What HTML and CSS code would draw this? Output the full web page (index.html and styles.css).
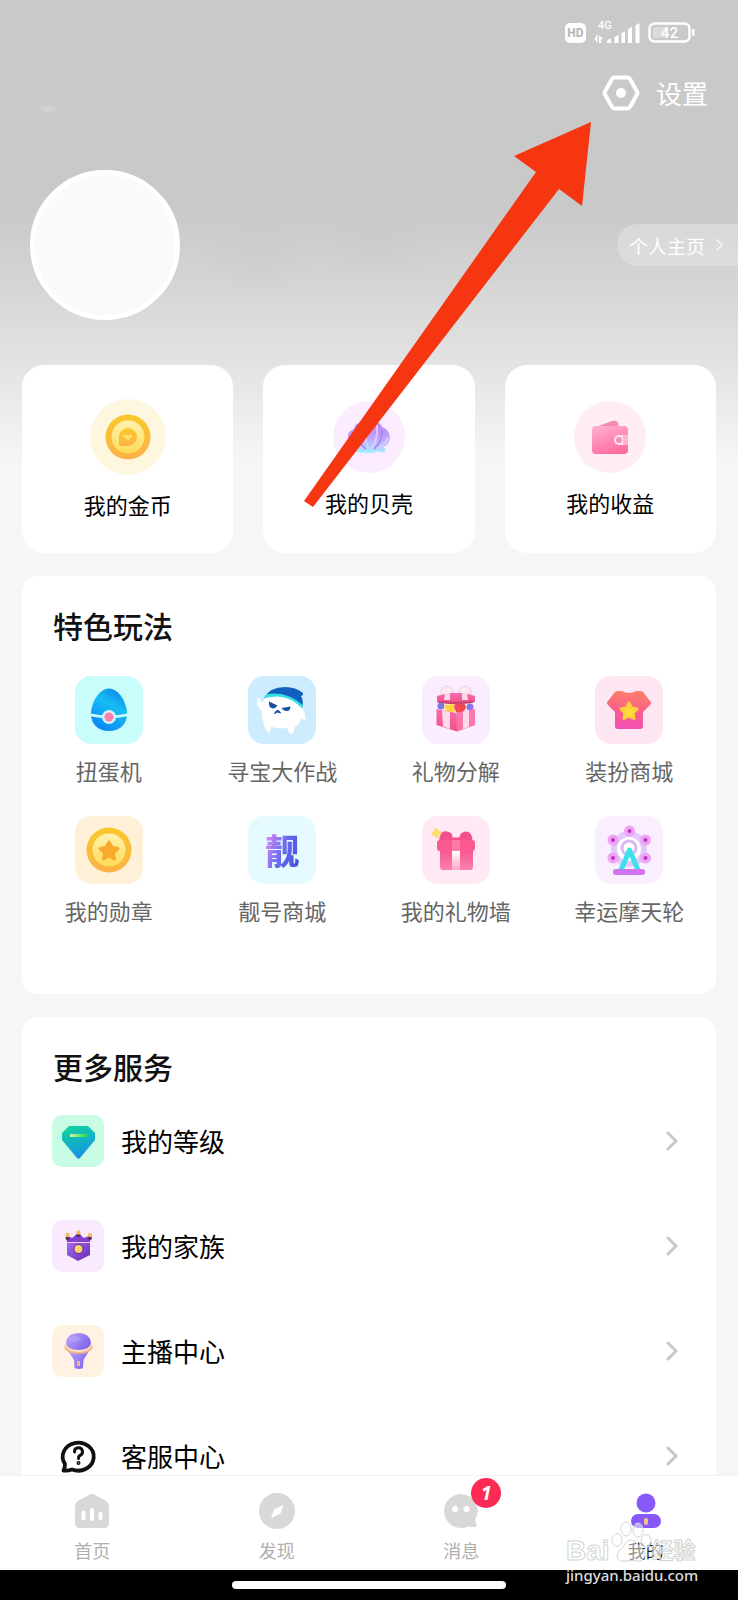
FILE: index.html
```html
<!DOCTYPE html>
<html lang="zh-CN">
<head>
  <meta charset="UTF-8" />
  <meta name="viewport" content="width=device-width, initial-scale=1" />
  <title>我的</title>
  <link rel="stylesheet" href="styles.css">
</head>
<body>
  <div class="app">
    <main class="page">
      <!-- Status bar -->
      <div class="status">
        <span class="hd">HD</span>
        <svg class="signal" viewBox="0 0 46 24" fill="#fff">
          <text x="4" y="8" font-size="11" font-weight="500" font-family="Roboto, sans-serif">4G</text>
          <path d="M0 17h2v-3h1.500v8zM5 14l4 4H7v4H5z"/>
          <path d="M13 22v-2q1-2 4-2.500V22zM20.500 22v-6l4-2v8zM27.500 22V12l3.500-1.500V22zM34 22V8l4-2v16zM41.500 22V4.500L45.500 2v20z"/>
        </svg>
        <svg class="battery" viewBox="0 0 48 22">
          <rect x="1.500" y="1.500" width="40" height="18" rx="5" fill="none" stroke="#fff" stroke-width="2.500"/>
          <rect x="5" y="5" width="14" height="11" rx="2" fill="#dcdcdc"/>
          <rect x="44" y="7" width="2.500" height="7" rx="1" fill="#fff"/>
          <text x="21.500" y="16" font-size="15" font-weight="500" text-anchor="middle" fill="#fff" font-family="Roboto, sans-serif">42</text>
        </svg>
      </div>

      <div class="toolbar">
        <a class="settings" href="#settings">
          <svg viewBox="0 0 38 36">
            <path d="M12.500 2.500h13q1.500 0 2.500 1.500l7 12.500q.800 1.500 0 3L28 32q-1 1.500-2.500 1.500h-13Q11 33.500 10 32L3 19.500q-.800-1.500 0-3L10 4q1-1.500 2.500-1.500z" fill="none" stroke="#fff" stroke-width="4"/>
            <circle cx="19" cy="18" r="5" fill="#fff"/>
          </svg>
          设置
        </a>
      </div>

      <div class="profile">
        <div class="avatar"></div>
        <a class="home-link" href="#profile">
          个人主页
          <svg viewBox="0 0 9 14"><path d="M1.500 1.500L7 7l-5.500 5.500" fill="none" stroke="#f4f4f4" stroke-width="1.500"/></svg>
        </a>
      </div>

      <div class="wallets">
        <a class="wallet" href="#coins">
          <svg class="wallet-icon wallet-icon-lg" viewBox="0 0 76 76">
            <defs>
              <linearGradient id="coinRing" x1="0" y1="0" x2="0" y2="1"><stop offset="0" stop-color="#f9c829"/><stop offset="1" stop-color="#fdb149"/></linearGradient>
              <linearGradient id="coinFace" x1="0" y1="0" x2="0" y2="1"><stop offset="0" stop-color="#fff3b0"/><stop offset="1" stop-color="#fedb55"/></linearGradient>
            </defs>
            <circle cx="38" cy="38" r="38" fill="#fef7e0"/>
            <circle cx="38" cy="38" r="22.500" fill="url(#coinRing)"/>
            <circle cx="38" cy="38" r="16.500" fill="url(#coinFace)"/>
            <path d="M29 38a9 9 0 1 1 9 9h-7q-2 0-2-2z" fill="url(#coinRing)"/>
            <path d="M33 35l3 1h3l3-1q1 3-1.500 4l-2.500 3-2.500-3Q32 38 33 35z" fill="#ffe169"/>
          </svg>
          <span>我的金币</span>
        </a>
        <a class="wallet" href="#shells">
          <svg class="wallet-icon" viewBox="0 0 72 72">
            <defs>
              <linearGradient id="shell" x1="0.500" y1="0" x2="0.500" y2="1"><stop offset="0" stop-color="#c07df4"/><stop offset="0.500" stop-color="#bfa0fa"/><stop offset="1" stop-color="#a5f0ff"/></linearGradient>
            </defs>
            <circle cx="36" cy="36" r="36" fill="#fbedff"/>
            <path d="M25 51q-5 0-3-4-7-2-7-9-1-8 6-10 1-7 8-6 6-5 11 0 7-2 9 4 8 3 8 11-1 7-7 9 3 1 2 4-2 3-6 0-10 4-21 1z" fill="url(#shell)"/>
            <path d="M33 48Q22 40 23 29M49 29q1 11-8 19" fill="none" stroke="#9d79ef" stroke-width="1.200"/>
            <path d="M29 47q-8-4-9-10M35 47q-4-12-1-22M39 47q6-10 5-22M45 47q8-4 10-10" fill="none" stroke="#dec8ff" stroke-width="2" stroke-linecap="round"/>
          </svg>
          <span>我的贝壳</span>
        </a>
        <a class="wallet" href="#income">
          <svg class="wallet-icon" viewBox="0 0 72 72">
            <defs>
              <linearGradient id="purse" x1="0.300" y1="0" x2="0.700" y2="1"><stop offset="0" stop-color="#ffa9ce"/><stop offset="1" stop-color="#fe6b9f"/></linearGradient>
            </defs>
            <circle cx="36" cy="36" r="36" fill="#ffedf3"/>
            <path d="M22 26l16-6q4-1.500 6 2l1 5z" fill="#f48ab0"/>
            <rect x="18" y="25" width="36" height="28" rx="4" fill="url(#purse)"/>
            <path d="M54 34h-9a5 5 0 0 0 0 10h9z" fill="#ffe4ee"/>
            <circle cx="45" cy="39" r="3" fill="#f98fb7"/>
            <path d="M49 34h5v10h-5z" fill="#fdb4ce"/>
          </svg>
          <span>我的收益</span>
        </a>
      </div>

      <section class="panel">
        <h2>特色玩法</h2>
        <div class="features">
          <a class="feature" href="#egg">
            <svg class="tile bg-cyan" viewBox="0 0 68 68">
              <defs><linearGradient id="egg" x1="0.800" y1="0" x2="0.300" y2="1"><stop offset="0" stop-color="#0b85e8"/><stop offset="0.400" stop-color="#17bdf4"/><stop offset="1" stop-color="#0b86f4"/></linearGradient></defs>
              <path d="M34 12.500C24 12.500 16 27 16 38c0 10 7 17 18 17s18-7 18-17c0-11-8-25.500-18-25.500z" fill="url(#egg)"/>
              <path d="M15.500 37.500q18.500 4 37 0v2.800q-18.500 4-37 0z" fill="#c9fdfc"/>
              <circle cx="34" cy="41" r="7" fill="#ccf6fb"/>
              <circle cx="34" cy="41" r="4.500" fill="#fc7eab"/>
            </svg>
            <span>扭蛋机</span>
          </a>
          <a class="feature" href="#treasure">
            <svg class="tile bg-sky" viewBox="0 0 68 68">
              <path d="M10 22q2 0 3.500 4l2.500-1 2-5h32q5 6 4.500 13 4 6 2.500 12l-4-3q-1 6-6 9-1 7-4 7-2.500-1-4-6-7 1-16-1-.500 7-3 5.500-4-4-4.500-10-2-5-1.500-11-4-4-5-8-.500-3 1-5.500z" fill="#fff"/>
              <path d="M16 22Q22 11 37 11q11 0 18 6v2l-2 1q3 5 1 12Q46 22 32 20q-8-1-16 2z" fill="#125fc0"/>
              <path d="M16 22l2-3.500Q29 16 40 20q8 3 14.500 9v3.500Q43 21 30 20.500q-7 0-14 1.500z" fill="#32dfe1"/>
              <path d="M21 25.500l8.500 4q-3 4-6 2.500-3-1-2.500-6.500zM42.500 30.500l-9 1.500q2 3.500 5.500 3 3 0 3.500-4.500z" fill="#164f9f"/>
              <path d="M26.500 37.500q3-6 6-.500l-3-1z" fill="#164f9f" stroke="#164f9f"/>
            </svg>
            <span>寻宝大作战</span>
          </a>
          <a class="feature" href="#decompose">
            <svg class="tile bg-lilac" viewBox="0 0 68 68">
              <defs>
                <linearGradient id="giftBox" x1="0" y1="0" x2="0" y2="1"><stop offset="0" stop-color="#fb6aad"/><stop offset="1" stop-color="#ef4f85"/></linearGradient>
              </defs>
              <circle cx="25" cy="16" r="6" fill="#fde9ef" stroke="#f3c9d5"/>
              <circle cx="43" cy="16" r="6" fill="#fde9ef" stroke="#f3c9d5"/>
              <path d="M15 20l11-3h17l10 3v5q-1 2-3 2l-16 1-16-1q-3 0-3-2z" fill="url(#giftBox)"/>
              <path d="M23 17h5v7h-6zM40 17h5l1 7h-6z" fill="#fbd9e6"/>
              <path d="M16 25q18 2 36 0l-2 2-16 1.500L18 27z" fill="#c2406c"/>
              <circle cx="19" cy="30" r="3.500" fill="#7d75e6"/>
              <path d="M22 29l10-1 1 9-9-2z" fill="#ffd53d"/>
              <path d="M32 30q3-5 6-2 6-2 6 4-2 4-6 6-5-1-6-8z" fill="#f04a57"/>
              <circle cx="48" cy="31" r="3.500" fill="#8978e8"/>
              <path d="M14.500 33L34 37l19-4v16l-18 6.500L14.500 49z" fill="url(#giftBox)"/>
              <path d="M34 37l19-4v16l-18 6.500z" fill="#fa86b5" opacity="0.650"/>
              <path d="M20 34.500l8 1.500v17l-7-2.500zM41 35.500l6-1.500v17l-6 2z" fill="#fddbe8"/>
            </svg>
            <span>礼物分解</span>
          </a>
          <a class="feature" href="#dressup">
            <svg class="tile bg-pink" viewBox="0 0 68 68">
              <defs><linearGradient id="shirt" x1="0.500" y1="0" x2="0.400" y2="1"><stop offset="0" stop-color="#fd7e69"/><stop offset="0.600" stop-color="#f95b91"/><stop offset="1" stop-color="#f150b6"/></linearGradient></defs>
              <path d="M23 15h4q7 4 14 0h4q2 0 3 1l7 9q2 2 0 4l-7 7v14q0 3-3 3H23q-3 0-3-3V36l-7-7q-2-2 0-4l7-9q1-1 3-1z" fill="url(#shirt)"/>
              <path d="M34 27l2.500 5 5.500 1-4 4 1 5.500-5-2.500-5 2.500 1-5.500-4-4 5.500-1z" fill="#ffe03a" stroke="#fdcf39" stroke-width="3" stroke-linejoin="round"/>
            </svg>
            <span>装扮商城</span>
          </a>
          <a class="feature" href="#medals">
            <svg class="tile bg-cream" viewBox="0 0 68 68">
              <circle cx="34" cy="34" r="22.500" fill="url(#coinRing)"/>
              <circle cx="34" cy="34" r="16.500" fill="url(#coinFace)"/>
              <path d="M34 26l3 5.500 6 1-4.500 4.500 1 6-5.500-3-5.500 3 1-6-4.500-4.500 6-1z" fill="#f8aa2e" stroke="#f8aa2e" stroke-width="3" stroke-linejoin="round"/>
            </svg>
            <span>我的勋章</span>
          </a>
          <a class="feature" href="#number">
            <b class="tile bg-ice"><i class="glyph">靓</i></b>
            <span>靓号商城</span>
          </a>
          <a class="feature" href="#giftwall">
            <svg class="tile bg-rose" viewBox="0 0 68 68">
              <defs>
                <linearGradient id="present" x1="0" y1="0" x2="0" y2="1"><stop offset="0" stop-color="#f74d8b"/><stop offset="1" stop-color="#fb82ac"/></linearGradient>
                <linearGradient id="ribbon" x1="0" y1="0" x2="0" y2="1"><stop offset="0" stop-color="#fff"/><stop offset="1" stop-color="#fda5c5"/></linearGradient>
              </defs>
              <path d="M13 11l4 4 4 1-4 3-1 4-4-3-3-3 3-2z" fill="#fedb6c"/>
              <path d="M17 25q1-11 8-9.500 6 1 5.500 6h7q0-5 6-6 7 0 7 9.500z" fill="#f34f8a"/>
              <rect x="18" y="30" width="33" height="24" rx="3" fill="url(#present)"/>
              <rect x="15" y="24" width="38" height="11" rx="3" fill="#fa5a8f"/>
              <path d="M30 24h8v11h-8z" fill="#fb7ba7"/>
              <path d="M30 35h8v19h-8z" fill="url(#ribbon)"/>
            </svg>
            <span>我的礼物墙</span>
          </a>
          <a class="feature" href="#wheel">
            <svg class="tile bg-violet" viewBox="0 0 68 68">
              <circle cx="34" cy="33" r="15" fill="#fff" stroke="#e3c8fb" stroke-width="6"/>
              <circle cx="34" cy="32" r="7" fill="none" stroke="#dab6f3" stroke-width="3"/>
              <g fill="#f0a3f4">
                <circle cx="34.500" cy="15" r="5.500"/><circle cx="18" cy="24" r="5.500"/><circle cx="50.500" cy="24" r="5.500"/>
                <circle cx="18" cy="42" r="5.500"/><circle cx="50.500" cy="42" r="5.500"/>
              </g>
              <g fill="#b239bd">
                <circle cx="34.500" cy="15" r="2"/><circle cx="18" cy="24" r="2"/><circle cx="50.500" cy="24" r="2"/>
                <circle cx="18" cy="42" r="2"/><circle cx="50.500" cy="42" r="2"/>
              </g>
              <path d="M26 54l8.500-20L43 54" fill="none" stroke="#3be1ec" stroke-width="5" stroke-linejoin="round"/>
              <rect x="18" y="53" width="32" height="6" rx="3" fill="#cf74ee"/>
            </svg>
            <span>幸运摩天轮</span>
          </a>
        </div>
      </section>

      <section class="panel">
        <h2>更多服务</h2>
        <ul class="services">
          <li><a href="#level">
            <svg class="service-icon bg-mint" viewBox="0 0 52 52">
              <defs>
                <linearGradient id="gem" x1="0.300" y1="0" x2="0.600" y2="1"><stop offset="0" stop-color="#10d3a0"/><stop offset="1" stop-color="#148fe8"/></linearGradient>
                <linearGradient id="shine"><stop offset="0" stop-color="#d8f5a5"/><stop offset="1" stop-color="#0edc45"/></linearGradient>
              </defs>
              <path d="M17 11h19l7 7v7L28 43q-1.500 1.500-3 0L10 25v-7z" fill="url(#gem)"/>
              <path d="M18 19h18v3H18z" fill="url(#shine)"/>
            </svg>
            <span>我的等级</span>
            <svg class="arrow" viewBox="0 0 12 20"><path d="M2 2l8 8-8 8"/></svg>
          </a></li>
          <li><a href="#family">
            <svg class="service-icon bg-lavender" viewBox="0 0 52 52">
              <defs><linearGradient id="shield" x1="0" y1="0" x2="1" y2="1"><stop offset="0" stop-color="#a66bea"/><stop offset="1" stop-color="#6829b5"/></linearGradient></defs>
              <path d="M14 15l6 3 6-5 6 5 7-3-1 7H15z" fill="#8242cf"/>
              <path d="M15 23h23v12l-12 6-11-6z" fill="url(#shield)"/>
              <path d="M15 22.500h23" stroke="#e7cbfc"/>
              <circle cx="15.500" cy="18" r="2" fill="#493055"/><circle cx="26.500" cy="15" r="2" fill="#493055"/><circle cx="38" cy="18" r="2" fill="#493055"/>
              <circle cx="15.500" cy="15" r="2.200" fill="#f2bd62"/><circle cx="26.500" cy="12.500" r="2.200" fill="#f2bd62"/><circle cx="38" cy="15" r="2.200" fill="#f2bd62"/>
              <circle cx="26.500" cy="29" r="5" fill="#59309b"/><circle cx="26.500" cy="29" r="4" fill="#ffd071"/>
            </svg>
            <span>我的家族</span>
            <svg class="arrow" viewBox="0 0 12 20"><path d="M2 2l8 8-8 8"/></svg>
          </a></li>
          <li><a href="#anchor">
            <svg class="service-icon bg-peach" viewBox="0 0 52 52">
              <defs><linearGradient id="mic" x1="0" y1="0" x2="1" y2="0.500"><stop offset="0" stop-color="#bba4fb"/><stop offset="1" stop-color="#8168ed"/></linearGradient></defs>
              <path d="M16 26h21l-5.500 9-.500 8q-4 2-8.500 0L22 35z" fill="url(#mic)"/>
              <ellipse cx="26.500" cy="22" rx="14" ry="7" fill="#f1b58e"/>
              <ellipse cx="26.500" cy="20.500" rx="13" ry="6.500" fill="#ffe0c2"/>
              <path d="M14 18q1-10 12.500-10T39 18q-1 7-12.500 7T14 18z" fill="url(#mic)"/>
              <ellipse cx="23" cy="14" rx="6" ry="3" fill="#c6b6ff" opacity="0.400"/>
              <rect x="25" y="36" width="3" height="5" rx="1" fill="#f2bd8e"/>
            </svg>
            <span>主播中心</span>
            <svg class="arrow" viewBox="0 0 12 20"><path d="M2 2l8 8-8 8"/></svg>
          </a></li>
          <li><a href="#support">
            <svg class="service-icon" viewBox="0 0 52 52" fill="none" stroke="#111" stroke-linecap="round" stroke-linejoin="round">
              <path d="M13 34a15.500 14 0 1 1 7 5.500Q16 41 11.500 40.500 13 38 13 34z" stroke-width="3.800"/>
              <path d="M22.500 22a4 4 0 1 1 5.500 3.500q-1.500.500-1.500 3" stroke-width="3"/>
              <circle cx="26.500" cy="33" r="0.700" stroke-width="2.600"/>
            </svg>
            <span>客服中心</span>
            <svg class="arrow" viewBox="0 0 12 20"><path d="M2 2l8 8-8 8"/></svg>
          </a></li>
        </ul>
      </section>
    </main>

    <nav class="tabs">
      <a class="tab" href="#home">
        <svg viewBox="0 0 36 36">
          <path d="M15 2q3-2 6 0l11 6q3 2 3 5v17q0 5-5 5H6q-5 0-5-5V13q0-3 3-5z" fill="#d8d8d8"/>
          <path d="M9.500 19.500v6M18 17v9M26.500 20.500v5" stroke="#fff" stroke-width="4" stroke-linecap="round"/>
        </svg>
        首页
      </a>
      <a class="tab" href="#discover">
        <svg viewBox="0 0 36 36">
          <circle cx="18" cy="18" r="18" fill="#d8d8d8"/>
          <path d="M24.500 12l-3 8.500-9.500 4.500 3-8.500z" fill="#fff"/>
        </svg>
        发现
      </a>
      <a class="tab" href="#messages">
        <svg viewBox="0 0 36 36">
          <path d="M18 1a17 17 0 0 1 14 26l1.500 5q.500 2-1.500 2l-7-.500A17 17 0 1 1 18 1z" fill="#d8d8d8"/>
          <circle cx="12" cy="16" r="3" fill="#fff"/><circle cx="23.500" cy="16" r="3" fill="#fff"/>
        </svg>
        <em class="badge">1</em>
        消息
      </a>
      <a class="tab active" href="#me">
        <svg viewBox="0 0 36 36">
          <circle cx="18" cy="10" r="9.500" fill="#8759fa"/>
          <rect x="3" y="21" width="30" height="14" rx="7" fill="#8759fa"/>
          <rect x="16" y="25" width="4" height="7" rx="2" fill="#f8c188"/>
        </svg>
        我的
      </a>
    </nav>
    <div class="gesture"><i></i></div>

    <svg class="pointer" viewBox="0 0 288 386">
      <path d="M287 0L210 34l22 16L0 379l9 6L255 67l23 17z" fill="#f63511"/>
    </svg>

    <div class="watermark">
      <div class="wm-logo">
        <span>Bai</span>
        <svg viewBox="0 0 42 44" fill="#fff" fill-opacity="0.500" stroke="#d4d4d4">
          <ellipse cx="7" cy="20" rx="5" ry="6.500"/>
          <ellipse cx="16" cy="9" rx="5" ry="7"/>
          <ellipse cx="28" cy="10" rx="5" ry="7"/>
          <ellipse cx="36" cy="21" rx="5" ry="6.500"/>
          <path d="M21 20q5 0 8 6 7 5 6 10-2 6-8 5-6-1-12 0-7 1-8-5 0-5 6-9 4-7 8-7z"/>
        </svg>
        <span>经验</span>
      </div>
      <div class="wm-url">jingyan.baidu.com</div>
    </div>
  </div>
</body>
</html>
```
FILE: styles.css
```css
* {
  box-sizing: border-box;
}
body {
  margin: 0;
  font-family: "Noto Sans CJK SC", sans-serif;
  background: #f6f6f6;
  color: #111;
}
a {
  color: inherit;
  text-decoration: none;
}
svg {
  display: block;
  flex-shrink: 0;
}
.app {
  position: relative;
  display: flex;
  flex-direction: column;
  height: 100vh;
}
.page {
  flex: 1;
  min-height: 0;
  overflow-y: auto;
  scrollbar-width: none;
  padding-top: 22px;
  background:
    radial-gradient(ellipse 9px 4px at 48px 109px, #d4d4d4 40%, transparent),
    radial-gradient(ellipse 60px 40px at 258px 256px, rgba(190, 190, 190, 0.2), transparent),
    radial-gradient(ellipse 60px 40px at 376px 246px, rgba(190, 190, 190, 0.2), transparent),
    linear-gradient(#c9c9c9 210px, #d5d5d5 285px, #e3e3e3 365px, #f6f6f6 460px);
}

/* top area */
.status {
  display: flex;
  justify-content: flex-end;
  align-items: center;
  gap: 8px;
  height: 21px;
  padding-right: 42px;
}
.hd {
  width: 21px;
  height: 20px;
  border-radius: 5px;
  background: #fff;
  color: #b5b5b5;
  font: bold 12px/20px Roboto, sans-serif;
  text-align: center;
}
.signal {
  width: 46px;
  height: 24px;
}
.battery {
  width: 48px;
  height: 22px;
}
.toolbar {
  display: flex;
  justify-content: flex-end;
  margin-top: 32px;
  padding-right: 30px;
}
.settings {
  display: flex;
  align-items: center;
  gap: 16px;
  color: #fff;
  font-size: 26px;
  line-height: 36px;
}
.settings svg {
  width: 38px;
  height: 36px;
}
.profile {
  display: flex;
  align-items: center;
  justify-content: space-between;
  margin-top: 59px;
  padding-left: 30px;
}
.avatar {
  width: 150px;
  height: 150px;
  border: 5px solid #fff;
  border-radius: 50%;
  background: #fafafa;
}
.home-link {
  display: flex;
  align-items: center;
  gap: 10px;
  height: 42px;
  padding: 0 14px 0 12px;
  border-radius: 21px 0 0 21px;
  background: rgba(255, 255, 255, 0.25);
  color: #fff;
  font-size: 19px;
}
.home-link svg {
  width: 9px;
  height: 14px;
}

.wallets {
  display: grid;
  grid-template-columns: repeat(3, 1fr);
  gap: 30px;
  margin: 45px 22px 0;
}
.wallet {
  display: flex;
  flex-direction: column;
  align-items: center;
  justify-content: center;
  gap: 14px;
  height: 188px;
  border-radius: 22px;
  background: #fff;
  color: #000;
  font-size: 22px;
  line-height: 30px;
}
.wallet-icon {
  width: 72px;
  height: 72px;
}
.wallet-icon-lg {
  width: 76px;
  height: 76px;
}

/* panels */
.panel {
  margin: 23px 22px 0;
  padding-top: 29px;
  border-radius: 16px;
  background: #fff;
}
h2 {
  margin: 0;
  padding: 0 31px;
  font-size: 30px;
  font-weight: 500;
  line-height: 40px;
}
.features {
  display: grid;
  grid-template-columns: repeat(4, 1fr);
  row-gap: 30px;
  padding: 31px 0 68px;
}
.feature {
  display: flex;
  flex-direction: column;
  align-items: center;
  gap: 10px;
  color: #666;
  font-size: 22px;
  line-height: 32px;
  white-space: nowrap;
}
.tile {
  width: 68px;
  height: 68px;
  border-radius: 16px;
}
.glyph {
  display: block;
  font-size: 34px;
  font-style: normal;
  font-weight: 900;
  line-height: 68px;
  text-align: center;
  background: linear-gradient(110deg, #e58cf0 25%, #6d6cf3 50%, #3f4fd8 75%);
  -webkit-background-clip: text;
  background-clip: text;
  color: transparent;
}
.bg-cyan { background: #c9fdfc; }
.bg-sky { background: #cdecfd; }
.bg-lilac { background: #faedff; }
.bg-pink { background: #fee6f3; }
.bg-cream { background: #fef1d8; }
.bg-ice { background: #e5fbff; }
.bg-rose { background: #ffe9f4; }
.bg-violet { background: #f9efff; }
.bg-mint { background: #c9fce5; }
.bg-lavender { background: #f9eaff; }
.bg-peach { background: #fff2e3; }

.services {
  margin: 0;
  padding: 2px 38px 0 30px;
  list-style: none;
}
.services a {
  display: flex;
  align-items: center;
  height: 105px;
  color: #000;
  font-size: 26px;
}
.services span {
  flex: 1;
  margin-left: 17px;
}
.service-icon {
  width: 52px;
  height: 52px;
  border-radius: 10px;
}
.arrow {
  width: 12px;
  height: 20px;
  fill: none;
  stroke: #c8c8c8;
  stroke-width: 3;
  stroke-linecap: round;
}

/* bottom tabs */
.tabs {
  display: flex;
  height: 95px;
  border-top: 1px solid #f2f2f2;
  background: #fff;
}
.tab {
  position: relative;
  flex: 1;
  display: flex;
  flex-direction: column;
  align-items: center;
  gap: 8px;
  padding-top: 17px;
  color: #b0b0b0;
  font-size: 18px;
  line-height: 26px;
}
.tab svg {
  width: 36px;
  height: 36px;
}
.tab.active {
  color: #222;
}
.badge {
  position: absolute;
  top: 2px;
  left: calc(50% + 10px);
  width: 30px;
  height: 30px;
  border-radius: 50%;
  background: #fd2b54;
  color: #fff;
  font: italic bold 19px/30px "Noto Sans", sans-serif;
  text-align: center;
}
.gesture {
  display: flex;
  justify-content: center;
  align-items: center;
  height: 30px;
  background: #000;
}
.gesture i {
  width: 37%;
  height: 8px;
  border-radius: 4px;
  background: #fff;
}

/* overlays */
.pointer {
  position: absolute;
  top: 122px;
  left: 304px;
  width: 288px;
  height: 386px;
}
.watermark {
  position: absolute;
  right: 40px;
  bottom: 14px;
  width: 132px;
}
.wm-logo {
  display: flex;
  align-items: flex-end;
  color: rgba(255, 255, 255, 0.5);
  font: bold 28px/26px "Liberation Sans", "Noto Sans CJK SC", sans-serif;
  -webkit-text-stroke: 1px #d4d4d4;
}
.wm-logo svg {
  width: 42px;
  height: 44px;
}
.wm-logo span:last-child {
  font-size: 22px;
}
.wm-url {
  color: #ddd;
  font: 500 15px/22px "Noto Sans", sans-serif;
  white-space: nowrap;
}
```
